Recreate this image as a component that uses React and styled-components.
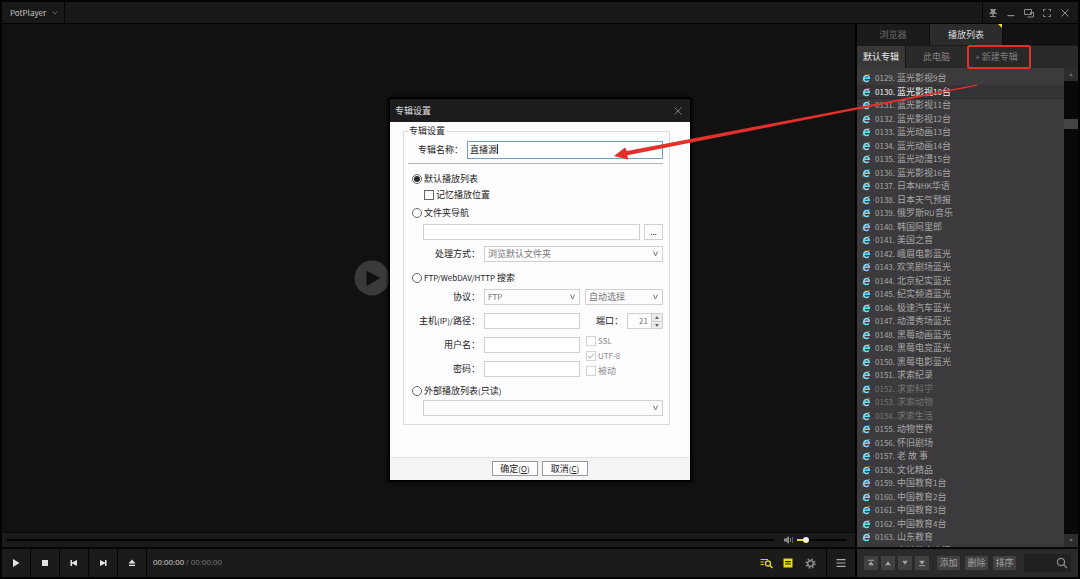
import React from "react";
import styled, { createGlobalStyle, css } from "styled-components";

const GlobalStyle = createGlobalStyle`
  *, *::before, *::after { box-sizing: border-box; }
  html, body { margin: 0; background: #000; }
  body, button, input, select {
    font-family: "Noto Sans CJK SC", "Open Sans", sans-serif;
    font-size: 9px;
    line-height: 12px;
  }
  button, input, select { margin: 0; padding: 0; border: 0; border-radius: 0; background: none; color: inherit; }
  fieldset, ul { margin: 0; padding: 0; list-style: none; }
`;

const Window = styled.div`
  position: relative;
  display: flex;
  flex-direction: column;
  gap: 1px;
  height: 100vh;
  padding: 2px;
  background: #030303;
  color: #a3a3a3;
  overflow: hidden;
`;

const Latin = styled.span`
  font-size: 8px;
`;

/* ---------- title bar ---------- */

const TitleBar = styled.header`
  display: flex;
  justify-content: space-between;
  flex: none;
  height: 21px;
  background: #181818;
`;

const AppMenu = styled.button`
  display: flex;
  align-items: center;
  gap: 6px;
  padding: 0 6px 0 8px;
  border-right: 1px solid #050505;
  font-size: 8px;
  color: #c4c4c4;
`;

const WindowButtons = styled.div`
  display: flex;
  align-items: center;
  gap: 2px;
  padding: 0 5px 0 2px;
  border-left: 1px solid #050505;
`;

const IconButton = styled.button`
  display: flex;
  align-items: center;
  justify-content: center;
  width: ${(p) => p.$width || 16}px;
  height: 100%;
  padding-right: ${(p) => p.$pad || 0}px;
  color: ${(p) => p.$color || "#8c8c8c"};
  border-right: ${(p) => (p.$divided ? "1px solid #050505" : "0")};
`;

/* ---------- player ---------- */

const Columns = styled.div`
  display: flex;
  flex: 1;
  gap: 2px;
  min-height: 0;
`;

const Player = styled.main`
  display: flex;
  flex-direction: column;
  flex: 1;
  min-width: 0;
`;

const Video = styled.section`
  display: flex;
  align-items: center;
  justify-content: center;
  flex: 1;
  background: #111;
`;

const Splash = styled.div`
  display: flex;
  width: 150px;
`;

const SeekRow = styled.div`
  display: flex;
  align-items: center;
  gap: 4px;
  height: 15px;
  padding: 0 8px 0 5px;
  background: #1a1a1a;
  border-top: 1px solid #080808;
`;

const Range = styled.input`
  appearance: none;
  height: 8px;
  background: linear-gradient(
    to right,
    ${(p) => p.$fill || "#000"} ${(p) => p.value}%,
    #040404 ${(p) => p.value}%
  ) center / 100% 2px no-repeat;
  &::-webkit-slider-thumb {
    appearance: none;
    width: 6px;
    height: 6px;
    border-radius: 50%;
    background: ${(p) => (p.$fill ? "#f4f2d8" : "transparent")};
  }
`;

const Seek = styled(Range)`
  flex: 1;
  min-width: 0;
  margin-right: 6px;
`;

const Volume = styled(Range)`
  width: 50px;
`;

const Controls = styled.div`
  display: flex;
  align-items: stretch;
  height: 30px;
  border-top: 2px solid #050505;
  background: #1b1b1b;
`;

const Time = styled.div`
  display: flex;
  align-items: center;
  flex: 1;
  padding-left: 6px;
  white-space: pre;
  font-family: "Liberation Sans", sans-serif;
  font-size: 8px;
  color: #777;
  strong { font-weight: 400; color: #d0d0d0; }
`;

/* ---------- playlist ---------- */

const Sidebar = styled.aside`
  display: flex;
  flex-direction: column;
  width: 221px;
  background: #2a2a2a;
`;

const Tabs = styled.nav`
  display: flex;
  flex: none;
  height: 22px;
  background: #121212;
  border-bottom: 1px solid #1a1a1a;
`;

const Tab = styled.button`
  position: relative;
  width: 73px;
  background: ${(p) => (p.$active ? "#2c2c2c" : "#1b1b1b")};
  color: ${(p) => (p.$active ? "#dedede" : "#6e6e6e")};
  border-right: 1px solid #0c0c0c;
`;

const Corner = styled.span`
  position: absolute;
  top: 0;
  right: 0;
  border: 2px solid transparent;
  border-top-color: #f0e21c;
  border-right-color: #f0e21c;
`;

const Albums = styled.nav`
  display: flex;
  flex: none;
  height: 22px;
  background: #292929;
`;

const Album = styled.button`
  position: relative;
  width: ${(p) => p.$width}px;
  padding-right: ${(p) => p.$pad || 0}px;
  background: ${(p) => (p.$active ? "#383738" : "transparent")};
  color: ${(p) => (p.$active ? "#ececec" : "#808080")};
  border-right: ${(p) => (p.$active ? "1px solid #111" : "0")};
`;

const Highlight = styled.span`
  position: absolute;
  inset: -1px 0 -1px 0;
  border: 2px solid #e3302a;
  border-radius: 3px;
`;

const ListArea = styled.div`
  display: flex;
  flex: 1;
  min-height: 0;
`;

const List = styled.ul`
  flex: 1;
  min-width: 0;
  padding-top: 3px;
  overflow: hidden;
  background: #3c3a3c;
`;

const Item = styled.li`
  display: flex;
  align-items: center;
  height: 14px;
  padding-left: 5px;
  white-space: pre;
  color: ${(p) => (p.$dim ? "#757575" : "#a8a8a8")};
  &:nth-child(even) { height: 13px; }
  ${(p) =>
    p.$current &&
    css`
      color: #f2f2f2;
      background: #353335;
      box-shadow: 0 1px #2b292b;
    `}
`;

const Num = styled(Latin)`
  width: 22px;
  margin-left: 4px;
`;

const ScrollBar = styled.div`
  display: flex;
  flex-direction: column;
  width: 14px;
  background: #09090b;
`;

const ScrollButton = styled.button`
  display: flex;
  align-items: center;
  justify-content: center;
  flex: none;
  height: 13px;
  background: #2e2d2e;
  color: #6a6a6a;
`;

const ScrollTrack = styled.div`
  flex: 1;
  padding-top: 38px;
`;

const ScrollThumb = styled.div`
  height: 10px;
  background: #444;
`;

const ListTools = styled.div`
  display: flex;
  align-items: center;
  flex: none;
  gap: 8px;
  height: 30px;
  padding: 0 7px;
  border-top: 2px solid #080808;
  background: #2a2a2a;
`;

const ToolGroup = styled.div`
  display: flex;
  flex: none;
  gap: ${(p) => p.$gap}px;
`;

const ToolButton = styled.button`
  display: flex;
  align-items: center;
  justify-content: center;
  flex: none;
  width: ${(p) => (p.$text ? 23 : 14)}px;
  height: 14px;
  background: #424042;
  border-radius: 1px;
  color: #a0a0a0;
`;

const Search = styled.label`
  display: flex;
  align-items: center;
  flex: 1;
  min-width: 0;
  height: 18px;
  padding-right: 3px;
  background: #222122;
  color: #8a8a8a;
  input { flex: 1; min-width: 0; outline: 0; }
`;

/* ---------- dialog ---------- */

const Overlay = styled.div`
  position: fixed;
  inset: 0;
  display: grid;
  place-items: center;
`;

const Dialog = styled.form`
  width: 300px;
  box-shadow: 0 0 0 1px #000, 0 0 3px 2px #000;
  color: #222;
`;

const DialogTitle = styled.div`
  display: flex;
  align-items: center;
  justify-content: space-between;
  height: 23px;
  padding: 0 4px 0 5px;
  background: #1c1c1f;
  color: #e2e2e2;
`;

const DialogBody = styled.div`
  padding: 3px 20px 32px 13px;
  background: #fdfcfe;
`;

const Group = styled.fieldset`
  display: block;
  min-width: 0;
  padding: 0 6px 8px 4px;
  border: 1px solid #dcdcdf;
  legend { height: 12px; padding: 0 1px; }
`;

const Row = styled.div`
  display: flex;
  align-items: center;
  gap: ${(p) => p.$gap || 4}px;
  margin-top: ${(p) => p.$top || 0}px;
  padding-left: ${(p) => p.$indent || 0}px;
`;

const Label = styled.label`
  flex: none;
  width: ${(p) => p.$width}px;
  text-align: right;
  white-space: nowrap;
`;

const Rule = styled.hr`
  height: 1px;
  margin: 4px 0 0;
  border: 0;
  background: #b4b4b8;
`;

const Choice = styled.label`
  display: flex;
  align-items: center;
  gap: 2px;
  height: ${(p) => p.$height || 14}px;
  margin-top: ${(p) => p.$top || 0}px;
  padding-left: ${(p) => p.$indent}px;
  white-space: pre;
  &:has(input:disabled) { color: #8c8c8e; }
`;

const Radio = styled.input.attrs({ type: "radio" })`
  appearance: none;
  width: 10px;
  height: 10px;
  border: 1px solid #666;
  border-radius: 50%;
  background: #fff;
  &:checked {
    background: #2a2a2a;
    background-clip: content-box;
    padding: 1px;
  }
`;

const Check = styled.input.attrs({ type: "checkbox" })`
  appearance: none;
  display: grid;
  place-items: center;
  width: 10px;
  height: 10px;
  border: 1px solid #666;
  background: #fff;
  &:disabled { border-color: #d3d3d6; }
  &:checked::after {
    content: "";
    width: 6px;
    height: 3px;
    border: solid #b4b4b6;
    border-width: 0 0 1px 1px;
    transform: rotate(-45deg);
  }
`;

const TextField = styled.input`
  flex: 1;
  min-width: 0;
  width: 100%;
  height: ${(p) => (p.$focused ? 18 : 16)}px;
  padding: ${(p) => (p.$focused ? "0 2px 2px" : "0 2px")};
  border: 1px solid ${(p) => (p.$focused ? "#6f9fc4" : "#d0d0d3")};
  background: #fff;
  outline: 0;
`;

const NameField = styled.div`
  position: relative;
  display: flex;
  flex: 1;
`;

const Caret = styled.span`
  position: absolute;
  left: 30px;
  top: 3px;
  width: 1px;
  height: 10px;
  background: #333;
`;

const SelectBox = styled.div`
  position: relative;
  display: flex;
  flex: 1;
  min-width: 0;
  color: #777;
  select {
    appearance: none;
    width: 100%;
    height: 16px;
    padding: 0 16px 0 3px;
    border: 1px solid #d0d0d3;
    background: #fdfcfe;
    font-size: ${(p) => (p.$latin ? 8 : 9)}px;
  }
  svg { position: absolute; right: 5px; top: 5px; pointer-events: none; }
`;

const Server = styled.div`
  display: flex;
  align-items: flex-start;
  gap: 5px;
  margin-top: 4px;
`;

const ServerFields = styled.div`
  display: grid;
  flex: none;
  grid-template-columns: 72px 96px;
  gap: 8px 4px;
  align-items: center;
`;

const ServerOptions = styled.div`
  display: flex;
  flex-direction: column;
  flex: 1;
  min-width: 0;
`;

const Spinner = styled.div`
  display: flex;
  flex: 1;
  min-width: 0;
  height: 16px;
  border: 1px solid #d0d0d3;
  background: #fff;
  input {
    appearance: textfield;
    flex: 1;
    min-width: 0;
    padding-right: 3px;
    text-align: right;
    font-size: 8px;
    color: #777;
  }
  input::-webkit-inner-spin-button { appearance: none; margin: 0; }
`;

const SpinButtons = styled.div`
  display: grid;
  flex: none;
  grid-template-rows: 1fr 1fr;
  width: 11px;
  border-left: 1px solid #d0d0d3;
  button {
    display: flex;
    align-items: center;
    justify-content: center;
    background: #ececef;
    color: #666;
  }
  button + button { border-top: 1px solid #d0d0d3; }
`;

const PushButton = styled.button`
  flex: none;
  width: ${(p) => p.$width}px;
  height: ${(p) => p.$height || 15}px;
  line-height: 10px;
  border: 1px solid ${(p) => p.$border || "#9a9a9e"};
  background: #fdfcfe;
  color: #222;
  u { text-underline-offset: 1px; }
`;

const DialogFooter = styled.div`
  display: flex;
  align-items: center;
  justify-content: center;
  gap: 4px;
  height: 23px;
  padding-bottom: 1px;
  border-top: 1px solid #e2e2e4;
  background: #f4f3f5;
`;

const Pointer = styled.svg`
  position: absolute;
  top: 80px;
  right: 98px;
  pointer-events: none;
`;

/* ---------- drawings ---------- */

const Chevron = () => (
  <svg width="5" height="6" viewBox="0 0 5 6" fill="none" stroke="currentColor">
    <path d="M0.5 0.5L2.5 5L4.5 0.5" />
  </svg>
);

const Triangle = ({ down, bar }) => (
  <svg width="8" height="8" viewBox="0 0 8 8" fill="currentColor">
    <g transform={down ? "rotate(180 4 4)" : undefined}>
      <path d="M4 2.2L6.8 6.2H1.2Z" />
      {bar && <path d="M1 0.8H7V1.8H1Z" />}
    </g>
  </svg>
);

const SmallTriangle = ({ down }) => (
  <svg width="4" height="3" viewBox="0 0 4 3" fill="currentColor">
    <path d={down ? "M0 0H4L2 3Z" : "M2 0L4 3H0Z"} />
  </svg>
);

const BrowserIcon = () => (
  <svg width="9" height="10" viewBox="0 0 18 20" fill="none">
    <path d="M2 17C1.5 12 5 5 15.5 3" stroke="#b9b765" strokeWidth="1.6" />
    <path d="M4 10.5H14.6A5.6 6 0 1 0 13.6 14.6" stroke="#7ddcf5" strokeWidth="3" />
  </svg>
);

const CloseIcon = ({ size = 8 }) => (
  <svg width={size} height={size} viewBox="0 0 8 8" stroke="currentColor">
    <path d="M0.5 0.5L7.5 7.5M7.5 0.5L0.5 7.5" />
  </svg>
);

const Glyph = ({ d, size = 10 }) => (
  <svg width={size} height={size} viewBox="0 0 10 10" fill="currentColor">
    <path d={d} />
  </svg>
);

const LineGlyph = ({ d, size = 10 }) => (
  <svg width={size} height={size} viewBox="0 0 10 10" fill="none" stroke="currentColor">
    <path d={d} />
  </svg>
);

const Gear = () => (
  <svg width="11" height="11" viewBox="0 0 22 22" fill="none" stroke="currentColor">
    <circle cx="11" cy="11" r="5.6" strokeWidth="3" />
    <circle cx="11" cy="11" r="8.6" strokeWidth="3.4" strokeDasharray="3.4 3.35" />
  </svg>
);

const transport = [
  ["播放", "M2 1V9L8.5 5Z"],
  ["停止", "M2 2H8V8H2Z"],
  ["上一个", "M1.5 2H3V4.6L8 2V8L3 5.4V8H1.5Z"],
  ["下一个", "M8.5 2H7V4.6L2 2V8L7 5.4V8H8.5Z"],
  ["打开", "M5 1.5L8.5 5.5H1.5ZM2 6.7H8V8H2Z"],
];

const channels = [
  "蓝光影视9台", "蓝光影视10台", "蓝光影视11台", "蓝光影视12台", "蓝光动画13台",
  "蓝光动画14台", "蓝光动漫15台", "蓝光影视16台", "日本NHK华语", "日本天气预报",
  "俄罗斯RU音乐", "韩国阿里郎", "美国之音", "峨眉电影蓝光", "欢笑剧场蓝光",
  "北京纪实蓝光", "纪实频道蓝光", "极速汽车蓝光", "动漫秀场蓝光", "黑莓动画蓝光",
  "黑莓电竞蓝光", "黑莓电影蓝光", "求索纪录", "求索科学", "求索动物",
  "求索生活", "动物世界", "怀旧剧场", "老 故 事", "文化精品",
  "中国教育1台", "中国教育2台", "中国教育3台", "中国教育4台", "山东教育",
  "吉林教育高清",
];

/* Latin letters and digits are set one size below the Chinese text. */
const Mixed = ({ children }) =>
  children
    .split(/([A-Za-z0-9/()-]+)/)
    .map((part, i) => (i % 2 ? <Latin key={i}>{part}</Latin> : part));

const Drop = ({ label, id, value, latin }) => (
  <SelectBox $latin={latin}>
    <select id={id} aria-label={label} defaultValue={value}>
      <option>{value}</option>
    </select>
    <Chevron />
  </SelectBox>
);

function AlbumDialog() {
  return (
    <Dialog onSubmit={(e) => e.preventDefault()}>
      <DialogTitle>
        专辑设置
        <IconButton type="button" aria-label="关闭" $color="#77777a">
          <CloseIcon />
        </IconButton>
      </DialogTitle>
      <DialogBody>
        <Group>
          <legend>专辑设置</legend>
          <Row $top={4}>
            <Label $width={55} htmlFor="name">专辑名称：</Label>
            <NameField>
              <TextField id="name" $focused defaultValue="直播源" />
              <Caret />
            </NameField>
          </Row>
          <Rule />
          <Choice $indent={4} $top={8}>
            <Radio name="kind" defaultChecked />默认播放列表
          </Choice>
          <Choice $indent={16} $top={2}>
            <Check />记忆播放位置
          </Choice>
          <Choice $indent={4} $top={4}>
            <Radio name="kind" />文件夹导航
          </Choice>
          <Row $top={4} $indent={15}>
            <TextField aria-label="文件夹" disabled />
            <PushButton type="button" $width={19} $height={16} $border="#d0d0d3">
              <Latin>...</Latin>
            </PushButton>
          </Row>
          <Row $top={6}>
            <Label $width={72} htmlFor="mode">处理方式：</Label>
            <Drop id="mode" value="浏览默认文件夹" />
          </Row>
          <Choice $indent={4} $top={9}>
            <Radio name="kind" />
            <span><Mixed>FTP/WebDAV/HTTP 搜索</Mixed></span>
          </Choice>
          <Server>
            <ServerFields>
              <Label $width={72} htmlFor="protocol">协议：</Label>
              <Drop id="protocol" value="FTP" latin />
              <Label $width={72} htmlFor="host"><Mixed>主机(IP)/路径：</Mixed></Label>
              <TextField id="host" disabled />
              <Label $width={72} htmlFor="user">用户名：</Label>
              <TextField id="user" disabled />
              <Label $width={72} htmlFor="password">密码：</Label>
              <TextField id="password" type="password" disabled />
            </ServerFields>
            <ServerOptions>
              <Row><Drop label="加密方式" value="自动选择" /></Row>
              <Row $top={8}>
                <Label $width={38} htmlFor="port">端口：</Label>
                <Spinner>
                  <input id="port" type="number" defaultValue="21" disabled />
                  <SpinButtons>
                    <button type="button" aria-label="增加"><SmallTriangle /></button>
                    <button type="button" aria-label="减少"><SmallTriangle down /></button>
                  </SpinButtons>
                </Spinner>
              </Row>
              <Choice $indent={1} $height={15} $top={4}>
                <Check disabled /><Latin>SSL</Latin>
              </Choice>
              <Choice $indent={1} $height={15}>
                <Check disabled defaultChecked /><Latin>UTF-8</Latin>
              </Choice>
              <Choice $indent={1} $height={15}>
                <Check disabled />被动
              </Choice>
            </ServerOptions>
          </Server>
          <Choice $indent={4} $top={6}>
            <Radio name="kind" />
            <span><Mixed>外部播放列表(只读)</Mixed></span>
          </Choice>
          <Row $top={2} $indent={15}>
            <Drop label="外部播放列表" value="" />
          </Row>
        </Group>
      </DialogBody>
      <DialogFooter>
        <PushButton $width={46}>确定<Latin>(<u>O</u>)</Latin></PushButton>
        <PushButton type="button" $width={46}>取消<Latin>(<u>C</u>)</Latin></PushButton>
      </DialogFooter>
    </Dialog>
  );
}

export default function App() {
  return (
    <Window>
      <GlobalStyle />
      <TitleBar>
        <AppMenu>
          PotPlayer
          <svg width="6" height="4" viewBox="0 0 6 4" fill="none" stroke="#666">
            <path d="M0.5 0.5L3 3L5.5 0.5" />
          </svg>
        </AppMenu>
        <WindowButtons>
          <IconButton aria-label="置顶"><Glyph d="M2 1H8V2.2H7V4.5H8.5V6H5.7V8H8V9H2V8H4.3V6H1.5V4.5H3V2.2H2Z" /></IconButton>
          <IconButton aria-label="最小化"><Glyph d="M1.5 7H8.5V8.2H1.5Z" /></IconButton>
          <IconButton aria-label="还原"><LineGlyph d="M0.5 1.5H7.5V6.5H0.5ZM9.5 4V9H3.5M6.5 6.5V4.5H9.5" /></IconButton>
          <IconButton aria-label="全屏"><LineGlyph d="M1.5 3.5V1.5H3.5M6.5 1.5H8.5V3.5M8.5 6.5V8.5H6.5M3.5 8.5H1.5V6.5" /></IconButton>
          <IconButton aria-label="关闭"><CloseIcon /></IconButton>
        </WindowButtons>
      </TitleBar>

      <Columns>
        <Player>
          <Video>
            <Splash>
              <svg width="36" height="36" viewBox="0 0 36 36">
                <circle cx="18" cy="18" r="17.5" fill="#3a3a3a" />
                <path d="M12.5 10.5V26L26.5 18Z" fill="#111" />
              </svg>
            </Splash>
          </Video>
          <SeekRow>
            <Seek type="range" aria-label="进度" value={0} readOnly />
            <svg width="9" height="8" viewBox="0 0 9 8" fill="#8a8a8a">
              <path d="M0 2.5H2L5 0V8L2 5.5H0ZM6 2H7V6H6ZM8 1H8.6V7H8Z" />
            </svg>
            <Volume type="range" aria-label="音量" $fill="#e8dc3a" value={14} readOnly />
          </SeekRow>
          <Controls>
            {transport.map(([name, d]) => (
              <IconButton key={name} aria-label={name} $width={29} $color="#e2e2e2" $divided>
                <Glyph d={d} />
              </IconButton>
            ))}
            <Time><strong>00:00:00</strong> / 00:00:00</Time>
            <IconButton aria-label="查找" $width={22} $color="#d8cb2e">
              <svg width="13" height="11" viewBox="0 0 13 11" fill="none" stroke="currentColor">
                <path d="M0.5 1.5H8M0.5 4H4M0.5 6.5H4" />
                <circle cx="8" cy="5.5" r="2.5" strokeWidth="1.4" />
                <path d="M10 7.5L12.5 10" strokeWidth="1.6" />
              </svg>
            </IconButton>
            <IconButton aria-label="播放列表" $width={22} $color="#e6da22">
              <Glyph d="M0.5 0.5V9.5H9.5V0.5ZM2.2 3H7.8V4.2H2.2ZM2.2 5.4H7.8V6.6H2.2Z" />
            </IconButton>
            <IconButton aria-label="设置" $width={28} $pad={5} $divided><Gear /></IconButton>
            <IconButton aria-label="菜单" $width={28} $color="#b0b0b0">
              <Glyph d="M0.5 1H9.5V2.2H0.5ZM0.5 4.4H9.5V5.6H0.5ZM0.5 7.8H9.5V9H0.5Z" />
            </IconButton>
          </Controls>
        </Player>

        <Sidebar>
          <Tabs>
            <Tab>浏览器</Tab>
            <Tab $active>播放列表<Corner /></Tab>
          </Tabs>
          <Albums>
            <Album $width={49} $active>默认专辑</Album>
            <Album $width={61}>此电脑</Album>
            <Album $width={64} $pad={5}><Latin>+</Latin> 新建专辑<Highlight /></Album>
          </Albums>
          <ListArea>
            <List>
              {channels.map((name, i) => (
                <Item key={name} $current={i === 1} $dim={i > 22 && i < 26}>
                  <BrowserIcon />
                  <Num>0{129 + i}.</Num>
                  <span><Mixed>{name}</Mixed></span>
                </Item>
              ))}
            </List>
            <ScrollBar>
              <ScrollButton aria-label="向上"><SmallTriangle /></ScrollButton>
              <ScrollTrack><ScrollThumb /></ScrollTrack>
              <ScrollButton aria-label="向下"><SmallTriangle down /></ScrollButton>
            </ScrollBar>
          </ListArea>
          <ListTools>
            <ToolGroup $gap={3}>
              <ToolButton aria-label="移到顶部"><Triangle bar /></ToolButton>
              <ToolButton aria-label="上移"><Triangle /></ToolButton>
              <ToolButton aria-label="下移"><Triangle down /></ToolButton>
              <ToolButton aria-label="移到底部"><Triangle down bar /></ToolButton>
            </ToolGroup>
            <ToolGroup $gap={5}>
              <ToolButton $text>添加</ToolButton>
              <ToolButton $text>删除</ToolButton>
              <ToolButton $text>排序</ToolButton>
            </ToolGroup>
            <Search>
              <input aria-label="搜索" />
              <svg width="12" height="12" viewBox="0 0 12 12" fill="none" stroke="currentColor" strokeWidth="1.3">
                <circle cx="5" cy="5" r="3.6" />
                <path d="M7.7 7.7L11 11" />
              </svg>
            </Search>
          </ListTools>
        </Sidebar>
      </Columns>

      <Overlay>
        <AlbumDialog />
      </Overlay>
      <Pointer width="370" height="84" viewBox="0 0 370 84" fill="#e3302a">
        <path d="M365 4.5L15 71L13 67.5L2 76L16 79.5L15.5 75.2L365 5.8Z" />
      </Pointer>
    </Window>
  );
}
